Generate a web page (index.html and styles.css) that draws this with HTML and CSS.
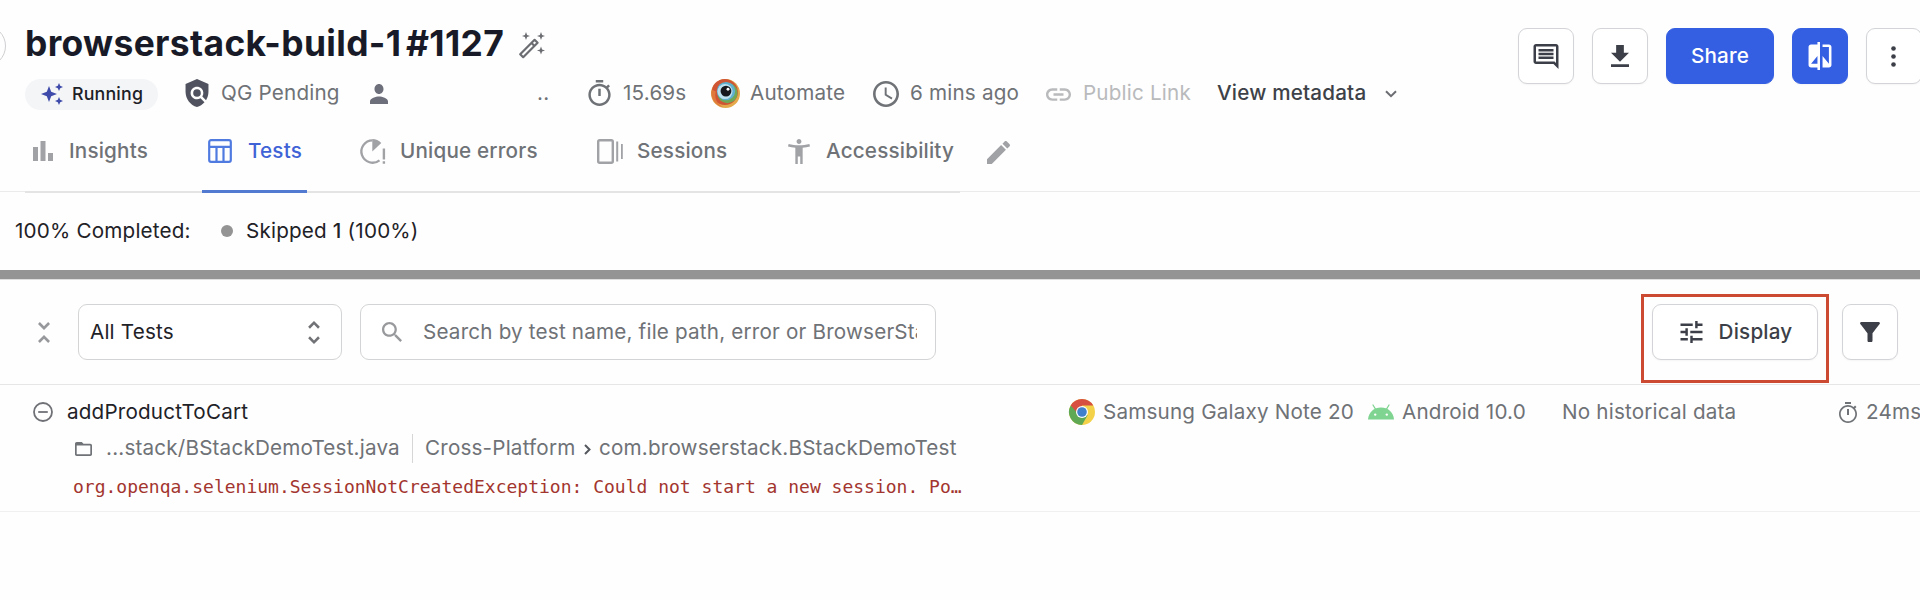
FILE: index.html
```html
<!DOCTYPE html>
<html lang="en">
<head>
<meta charset="utf-8">
<title>browserstack-build-1 #1127</title>
<link rel="stylesheet" href="styles.css">
</head>
<body>
<header class="header">
  <div class="header-main">
    <span class="back"></span>
    <div class="title-row">
      <h1 class="title"><span class="build-name">browserstack-build-1</span><span class="build-no">#1127</span></h1>
      <svg class="i-wand" viewBox="0 0 27 27"><path d="M2.2 22.2 16.6 7.8l3 3L5.200 25.200zM13.500 11l3 3" fill="none" stroke="#6b6d72" stroke-width="2.200" stroke-linejoin="round"/><path fill="#6b6d72" d="M8 0l1.100 2.900L12 4 9.100 5.100 8 8 6.900 5.100 4 4l2.900-1.100zM23 0l1.100 2.900L27 4l-2.900 1.100L23 8l-1.100-2.900L19 4l2.900-1.100zM23 14.500l1.100 2.900 2.900 1.100-2.900 1.100-1.100 2.900-1.100-2.900-2.900-1.100 2.900-1.100z"/></svg>
    </div>
    <div class="meta-row">
      <span class="pill">
        <svg class="i-sparkle" viewBox="0 0 22 22"><path fill="#3f4bab" d="M8 3l2.200 5.800L16 11l-5.800 2.200L8 19l-2.200-5.800L0 11l5.800-2.200zM18 0l1.200 2.800L22 4l-2.800 1.200L18 8l-1.200-2.800L14 4l2.800-1.200zM18 14l1.200 2.800L22 18l-2.800 1.200L18 22l-1.200-2.800L14 18l2.800-1.200z"/></svg>
        <span class="running">Running</span>
      </span>
      <svg class="i-shield" viewBox="3 1 18 22"><path d="M21 5l-9-4-9 4v6c0 5.550 3.840 10.740 9 12 2.300-.56 4.330-1.900 5.880-3.710l-3.120-3.120c-1.940 1.290-4.580 1.070-6.290-.64-1.950-1.950-1.950-5.120 0-7.070 1.950-1.950 5.120-1.950 7.070 0 1.710 1.710 1.920 4.350.64 6.290l2.900 2.900C20.290 15.690 21 13.380 21 11V5z"/><circle cx="12" cy="12" r="3"/></svg>
      <span class="t-qg">QG Pending</span>
      <svg class="i-person" viewBox="4 4 16 16" preserveAspectRatio="none"><path d="M12 12c2.210 0 4-1.790 4-4s-1.790-4-4-4-4 1.790-4 4 1.790 4 4 4zm0 2c-2.670 0-8 1.340-8 4v2h16v-2c0-2.660-5.330-4-8-4z"/></svg>
      <span class="t-dots">..</span>
      <svg class="i-timer" viewBox="3 1 18 21"><path d="M15 1H9v2h6V1zm-4 13h2V8h-2v6zm8.030-6.610l1.420-1.420c-.43-.51-.9-.99-1.410-1.410l-1.420 1.420C16.070 4.740 14.120 4 12 4c-4.970 0-9 4.030-9 9s4.020 9 9 9 9-4.030 9-9c0-2.120-.74-4.070-1.970-5.610zM12 20c-3.870 0-7-3.130-7-7s3.130-7 7-7 7 3.130 7 7-3.130 7-7 7z"/></svg>
      <span class="t-time">15.69s</span>
      <svg class="i-eye" viewBox="0 0 30 30"><circle cx="15" cy="15" r="15" fill="#e3a94a"/><circle cx="14.300" cy="13.500" r="13.500" fill="#cf5535"/><path d="M1 11a14 14 0 0 0 12 18 13 13 0 0 1-8-16z" fill="#e07a3c"/><circle cx="17" cy="14.500" r="10.500" fill="#71a857"/><circle cx="15.500" cy="12.500" r="9.500" fill="#5fb0cf"/><circle cx="14.500" cy="13" r="7.800" fill="#bfe0ee"/><circle cx="15.500" cy="12.500" r="5.600" fill="#17181d"/><circle cx="17.600" cy="10.600" r="1.500" fill="#fff"/></svg>
      <span class="t-auto">Automate</span>
      <svg class="i-clock" viewBox="2 2 20 20"><path d="M11.990 2C6.470 2 2 6.480 2 12s4.470 10 9.990 10C17.520 22 22 17.520 22 12S17.520 2 11.990 2zM12 20c-4.420 0-8-3.580-8-8s3.580-8 8-8 8 3.580 8 8-3.580 8-8 8zm.5-13H11v6l5.250 3.150.75-1.230-4.500-2.670z"/></svg>
      <span class="t-ago">6 mins ago</span>
      <svg class="i-link" viewBox="2 7 20 10"><path d="M3.900 12c0-1.710 1.390-3.100 3.100-3.100h4V7H7c-2.760 0-5 2.240-5 5s2.240 5 5 5h4v-1.900H7c-1.710 0-3.100-1.390-3.100-3.100zM8 13h8v-2H8v2zm9-6h-4v1.900h4c1.710 0 3.100 1.390 3.100 3.100s-1.390 3.100-3.100 3.100h-4V17h4c2.760 0 5-2.240 5-5s-2.240-5-5-5z"/></svg>
      <span class="t-link">Public Link</span>
      <span class="t-view">View metadata</span>
      <svg class="i-chev" viewBox="0 0 12 8"><path d="M1 1.200l5 5 5-5" fill="none" stroke="#6b6d72" stroke-width="2"/></svg>
    </div>
  </div>
  <div class="actions">
    <button class="btn"><svg class="i-comment" viewBox="2 2 20 20"><path d="M21.990 4c0-1.100-.89-2-1.990-2H4c-1.100 0-2 .9-2 2v12c0 1.100.9 2 2 2h14l4 4-.01-18zM20 4v13.170L18.830 16H4V4h16zM6 12h12v2H6zm0-3h12v2H6zm0-3h12v2H6z"/></svg></button>
    <button class="btn"><svg class="i-download" viewBox="5 3 14 17"><path d="M19 9h-4V3H9v6H5l7 7 7-7zM5 18v2h14v-2H5z"/></svg></button>
    <button class="btn primary share"><span>Share</span></button>
    <button class="btn primary"><svg class="i-compare" viewBox="3 1 18 22"><path d="M10 3H5c-1.100 0-2 .9-2 2v14c0 1.100.9 2 2 2h5v2h2V1h-2v2zm0 15H5l5-6v6zm9-15h-5v2h5v13l-5-6v9h5c1.100 0 2-.9 2-2V5c0-1.100-.9-2-2-2z"/></svg></button>
    <button class="btn"><svg class="i-dots" viewBox="0 0 5 21"><circle cx="2.500" cy="2.500" r="2.300"/><circle cx="2.500" cy="10.500" r="2.300"/><circle cx="2.500" cy="18.500" r="2.300"/></svg></button>
  </div>
</header>
<nav class="tabs-wrap">
  <div class="tabs">
    <a class="tab tab-insights"><svg class="i-bars" viewBox="0 0 20 20"><path d="M0 6h5v14H0zM7.500 0h5v20h-5zM15 12h5v8h-5z"/></svg><span>Insights</span></a>
    <a class="tab tab-tests active"><svg class="i-table" viewBox="0 0 24 24"><path d="M3 1.200h18a1.800 1.800 0 0 1 1.800 1.800v18a1.800 1.800 0 0 1-1.800 1.800H3A1.800 1.800 0 0 1 1.200 21V3A1.800 1.800 0 0 1 3 1.200zM1.200 7.800h21.600M8.500 7.800v15M15.500 7.800v15" fill="none" stroke="#4f7be0" stroke-width="2.200"/></svg><span>Tests</span></a>
    <a class="tab tab-errors"><svg class="i-uniq" viewBox="0 0 26 25"><path d="M12.500 1.300A11.200 11.200 0 1 0 19.500 21.300" fill="none" stroke="#a1a2a6" stroke-width="2.300"/><path d="M12.300 0c3.500 0 6.700 1.500 9 4l-9 8.500zM22.700 9.500h2.400v11h-2.400zM22.700 22.200h2.400v2.500h-2.400z"/></svg><span>Unique errors</span></a>
    <a class="tab tab-sessions"><svg class="i-sess" viewBox="0 0 26 25"><rect x="1.200" y="1.200" width="14.600" height="22.600" rx="1.500" fill="none" stroke="#a1a2a6" stroke-width="2.400"/><path d="M19.200 2.500h2v20h-2zM24 5h1.800v15H24z"/></svg><span>Sessions</span></a>
    <a class="tab tab-acc"><svg class="i-acc" viewBox="3 2 18 20" preserveAspectRatio="none"><path d="M20.500 6c-2.610.7-5.670 1-8.500 1s-5.890-.3-8.500-1L3 8c1.860.5 4 .83 6 1v13h2v-6h2v6h2V9c2-.17 4.140-.5 6-1l-.5-2zM12 6c1.100 0 2-.9 2-2s-.9-2-2-2-2 .9-2 2 .9 2 2 2z"/></svg><span>Accessibility</span></a>
  </div>
  <svg class="i-edit" viewBox="3 3 18 18"><path d="M3 17.250V21h3.750L17.810 9.940l-3.750-3.750L3 17.250zM20.710 7.040c.39-.39.39-1.020 0-1.410l-2.340-2.340c-.39-.39-1.020-.39-1.410 0l-1.830 1.830 3.750 3.750 1.830-1.830z"/></svg>
</nav>
<section class="summary">
  <span class="t-done">100% Completed:</span>
  <i class="dot"></i>
  <span class="t-skip">Skipped <b>1</b> (100%)</span>
</section>
<div class="progress"></div>
<section class="toolbar">
  <svg class="i-less" viewBox="7.410 4 9.180 16"><path d="M7.410 18.590L8.830 20 12 16.830 15.170 20l1.410-1.410L12 14l-4.590 4.590zm9.180-13.180L15.170 4 12 7.170 8.830 4 7.410 5.410 12 10l4.590-4.590z"/></svg>
  <div class="select"><span>All Tests</span><svg class="i-more" viewBox="7.410 3 9.180 18"><path d="M12 5.830L15.170 9l1.410-1.410L12 3 7.410 7.590 8.830 9 12 5.830zm0 12.340L8.830 15l-1.410 1.410L12 21l4.590-4.590L15.170 15 12 18.170z"/></svg></div>
  <div class="search"><svg class="i-search" viewBox="3 3 17.500 17.500"><path d="M15.500 14h-.79l-.28-.27C15.410 12.590 16 11.110 16 9.500 16 5.910 13.090 3 9.500 3S3 5.910 3 9.500 5.910 16 9.500 16c1.610 0 3.090-.59 4.230-1.570l.27.28v.79l5 4.990L20.490 19l-4.990-5zm-6 0C7.010 14 5 11.990 5 9.500S7.010 5 9.500 5 14 7.010 14 9.500 11.990 14 9.500 14z"/></svg><span>Search by test name, file path, error or BrowserStack</span></div>
  <div class="highlight">
    <button class="btn display"><svg class="i-tune" viewBox="3 3 18 18"><path d="M3 17v2h6v-2H3zM3 5v2h10V5H3zm10 16v-2h8v-2h-8v-2h-2v6h2zM7 9v2H3v2h4v2h2V9H7zm14 4v-2H11v2h10zm-6-4h2V7h4V5h-4V3h-2v6z"/></svg><span>Display</span></button>
  </div>
  <button class="btn filter"><svg class="i-filter" viewBox="4 4 16 16"><path d="M4.250 5.610C6.270 8.200 10 13 10 13v6c0 .55.45 1 1 1h2c.55 0 1-.45 1-1v-6s3.720-4.800 5.740-7.390c.51-.66.04-1.610-.79-1.610H5.040c-.83 0-1.300.95-.79 1.610z"/></svg></button>
</section>
<section class="test">
  <div class="test-row">
    <svg class="i-minus" viewBox="0 0 20 20"><circle cx="10" cy="10" r="9" fill="none" stroke="#6f7176" stroke-width="1.800"/><path d="M5.200 9.100h9.600v1.800H5.200z"/></svg>
    <span class="t-name">addProductToCart</span>
    <svg class="i-chrome" viewBox="0 0 26 26"><circle cx="13" cy="13" r="13" fill="#f3d24a"/><path d="M13 13 1.740 6.500A13 13 0 0 0 13 26l5.600-9.700z" fill="#5fa854"/><path d="M13 13H7.400L1.740 6.500a13 13 0 0 1 22.520 0H13z" fill="#d64f41"/><circle cx="13" cy="13" r="6" fill="#fff"/><circle cx="13" cy="13" r="4.800" fill="#3f7fcb"/></svg>
    <span class="t-device">Samsung Galaxy Note 20</span>
    <svg class="i-android" viewBox="0 0 26 16"><path d="M5 1l2.800 4.600M21 1l-2.800 4.600" stroke="#7fd491" stroke-width="1.200" stroke-linecap="round"/><path d="M0 15.500C.6 8 6 3.500 13 3.500S25.400 8 26 15.500z" fill="#7fd491"/><circle cx="7.200" cy="10.600" r="1.200" fill="#fff"/><circle cx="18.800" cy="10.600" r="1.200" fill="#fff"/></svg>
    <span class="t-os">Android 10.0</span>
    <span class="t-hist">No historical data</span>
    <svg class="i-timer2" viewBox="3 1 18 21"><path d="M15 1H9v2h6V1zm-4 13h2V8h-2v6zm8.030-6.610l1.420-1.420c-.43-.51-.9-.99-1.410-1.410l-1.420 1.420C16.070 4.740 14.120 4 12 4c-4.970 0-9 4.030-9 9s4.020 9 9 9 9-4.030 9-9c0-2.120-.74-4.070-1.970-5.610zM12 20.300c-4 0-7.300-3.300-7.300-7.300s3.300-7.300 7.300-7.300 7.300 3.300 7.300 7.300-3.300 7.300-7.300 7.300z"/></svg>
    <span class="t-ms">24ms</span>
  </div>
  <div class="path-row">
    <svg class="i-folder" viewBox="2 4 20 16" preserveAspectRatio="none"><path d="M20 6h-8l-2-2H4c-1.100 0-1.990.9-1.990 2L2 18c0 1.100.9 2 2 2h16c1.100 0 2-.9 2-2V8c0-1.100-.9-2-2-2zm0 12H4V8h16v10z"/></svg>
    <span class="t-file">...stack/BStackDemoTest.java</span>
    <i class="divider"></i>
    <span class="t-cross">Cross-Platform</span>
    <svg class="i-right" viewBox="0 0 7 11"><path d="M1 1l4.500 4.500L1 10" fill="none" stroke="#55585e" stroke-width="2"/></svg>
    <span class="t-class">com.browserstack.BStackDemoTest</span>
  </div>
  <div class="error">org.openqa.selenium.SessionNotCreatedException: Could not start a new session. Po…</div>
</section>
</body>
</html>
```
FILE: styles.css
```css
* { box-sizing: border-box; }
body {
  margin: 0;
  height: 600px;
  overflow: hidden;
  background: #fefefe;
  color: #6f7276;
  font-family: Inter, "Liberation Sans", sans-serif;
  font-size: 20.65px;
  line-height: 28px;
  letter-spacing: .19px;
  white-space: nowrap;
}
svg { display: block; flex: none; fill: currentColor; overflow: visible; }
span { flex: none; }

.header { display: flex; justify-content: space-between; height: 114px; }
.header-main { position: relative; padding-top: 22px; }
.back {
  position: absolute; left: -36px; top: 25px;
  width: 42px; height: 42px;
  border: 1px solid #cfcfd1; border-radius: 50%;
}
.title-row { display: flex; align-items: center; height: 44px; padding-left: 25px; }
.title { display: flex; margin: 0; width: 493px; font-size: 35.4px; font-weight: 700; line-height: 44px; letter-spacing: .34px; color: #181b27; }
.build-name { width: 381px; }
.i-wand { width: 27px; height: 27px; margin-top: 2px; }

.meta-row { display: flex; align-items: center; height: 42px; margin-top: 6px; padding-left: 25px; }
.pill { display: flex; align-items: center; width: 133px; height: 31px; margin-top: 2px; padding-left: 16px; border-radius: 16px; background: #f4f5f7; }
.i-sparkle { width: 22px; height: 22px; margin-right: 9px; }
.running { color: #1d2026; font-size: 17.8px; font-weight: 500; }
.i-shield { width: 24px; height: 28px; margin-left: 27px; color: #50535f; }
.t-qg { width: 119px; margin-left: 12px; }
.i-person { width: 18px; height: 20px; margin: 1px 0 0 30px; color: #6d6f7b; }
.t-dots { width: 12px; margin-left: 149px; }
.i-timer { width: 23px; height: 26px; margin-left: 39px; }
.t-time { width: 64px; margin-left: 12px; }
.i-eye { width: 29px; height: 29px; margin-left: 24px; }
.t-auto { width: 97px; margin-left: 10px; }
.i-clock { width: 26px; height: 26px; margin: 1px 0 0 26px; }
.t-ago { width: 109px; margin-left: 11px; }
.i-link { width: 25px; height: 13px; margin: 2px 0 0 27px; color: #b9babc; }
.t-link { width: 108px; margin-left: 12px; color: #b9babc; }
.t-view { width: 149px; margin-left: 26px; color: #3d4148; font-weight: 500; }
.i-chev { width: 12px; height: 8px; margin: 2px 0 0 19px; }

.actions { display: flex; gap: 18px; padding-top: 28px; margin-right: -2px; }
.btn {
  display: flex; align-items: center; justify-content: center; flex: none;
  width: 56px; height: 56px; padding: 0;
  border: 1px solid #d3d4d7; border-radius: 9px;
  background: #fff; color: #3c3f48;
  font: 500 20.65px/28px Inter, "Liberation Sans", sans-serif;
  letter-spacing: .19px;
  box-shadow: 0 1px 2px rgba(0, 0, 0, .04);
}
.primary { border-color: #355fe3; background: #355fe3; color: #fff; }
.share { width: 108px; }
.i-comment { width: 26px; height: 25px; }
.i-download { width: 18px; height: 22px; }
.i-compare { width: 24px; height: 28px; }
.i-dots { width: 5px; height: 21px; margin-right: 1px; }

.tabs-wrap { display: flex; align-items: flex-start; height: 78px; border-bottom: 1px solid #ebebec; padding-left: 25px; margin-bottom: 2px; }
.tabs { display: flex; width: 935px; height: 79px; border-bottom: 2px solid #e4e4e5; }
.tab { display: flex; align-items: center; height: 79px; padding-bottom: 5px; color: #a1a2a6; font-weight: 500; }
.tab span { color: #6f7276; margin-left: -1px; }
.tab.active { border-bottom: 3px solid #527ad0; color: #4f7be0; padding-bottom: 2px; }
.tab.active span { color: #3f63d6; }
.tab-insights { width: 177px; padding-left: 8px; }
.tab-tests { width: 105px; padding-left: 6px; }
.tab-errors { width: 290px; padding-left: 53px; }
.tab-sessions { width: 191px; }
.tab-acc { width: 172px; }
.i-bars { width: 20px; height: 20px; margin-right: 17px; }
.i-table { width: 24px; height: 24px; margin-right: 17px; }
.i-uniq { width: 26px; height: 25px; margin-right: 15px; }
.i-sess { width: 26px; height: 25px; margin-right: 15px; }
.i-acc { width: 22px; height: 25px; margin-right: 17px; }
.i-edit { width: 23px; height: 23px; margin: 27px 0 0 27px; color: #a1a2a6; }

.summary { display: flex; align-items: center; height: 76px; padding: 0 0 3px 15px; color: #1f2227; }
.t-done { width: 176px; }
.dot { width: 12px; height: 12px; margin: 0 13px 0 30px; border-radius: 50%; background: #949494; }
.t-skip b { font-weight: 500; }
.progress { height: 10px; background: #949494; border-bottom: 1px solid #dedede; }

.toolbar { display: flex; align-items: center; height: 105px; padding: 0 22px 0 38px; border-bottom: 1px solid #e6e6e7; }
.i-less { width: 12px; height: 21px; color: #97989b; }
.select { display: flex; align-items: center; justify-content: space-between; width: 264px; height: 56px; margin-left: 28px; padding: 0 21px 0 11px; border: 1px solid #d3d4d5; border-radius: 9px; background: #fff; color: #1f2227; }
.i-more { width: 12px; height: 23px; color: #717276; }
.search { display: flex; align-items: center; width: 576px; height: 56px; margin-left: 18px; padding-left: 21px; border: 1px solid #d3d4d5; border-radius: 9px; background: #fff; }
.i-search { width: 20px; height: 20px; color: #98999c; }
.search span { width: 494px; margin-left: 21px; overflow: hidden; }
.highlight { width: 188px; height: 89px; margin: 13px 13px 0 auto; padding: 7px 8px; border: 3px solid #cb4a31; }
.display { width: 166px; padding-left: 2px; }
.i-tune { width: 23px; height: 22px; margin-right: 16px; }
.i-filter { width: 20px; height: 20px; }

.test { height: 127px; padding-top: 9px; border-bottom: 1px solid #f0f0f1; }
.test-row { display: flex; align-items: center; height: 36px; padding-left: 33px; }
.i-minus { width: 20px; height: 20px; color: #6f7176; }
.t-name { width: 1002px; margin-left: 14px; color: #1f2227; }
.i-chrome { width: 26px; height: 26px; }
.t-device { width: 265px; margin-left: 8px; }
.i-android { width: 26px; height: 16px; }
.t-os { width: 160px; margin-left: 8px; }
.t-hist { width: 277px; }
.i-timer2 { width: 18px; height: 21px; margin-right: 9px; }
.path-row { display: flex; align-items: center; height: 36px; padding-left: 75px; }
.i-folder { width: 17px; height: 14px; margin-top: 2px; }
.t-file { width: 306px; margin-left: 14px; }
.divider { width: 1px; height: 29px; margin-right: 12px; background: #d5d6d8; }
.t-cross { width: 159px; }
.i-right { width: 7px; height: 11px; margin: 2px 8px 0 0; }
.error { padding-left: 73px; margin-top: 9px; font: 18px/24px "DejaVu Sans Mono", monospace; letter-spacing: 0; color: #a3352f; }
```
